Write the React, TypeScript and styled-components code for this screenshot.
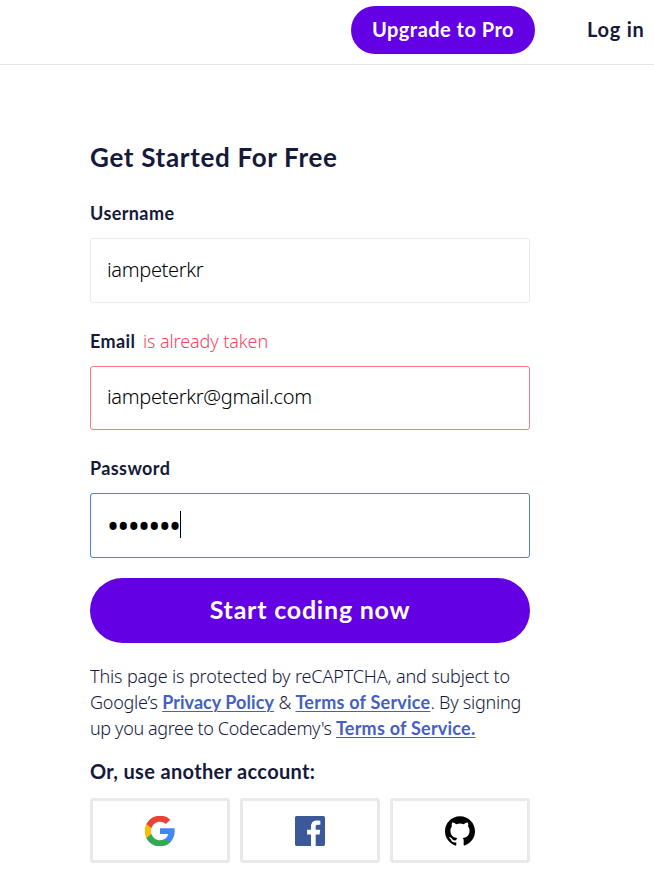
import React from 'react';
import styled, { createGlobalStyle, css } from 'styled-components';

const GlobalStyle = createGlobalStyle`
  *, *::before, *::after { box-sizing: border-box; }
  body { margin: 0; background: #fff; color: #15193a; font-family: "Noto Sans", sans-serif; }
`;

const strong = css`
  font-family: Lato, sans-serif;
  font-weight: 700;
`;

const Page = styled.div`
  width: 654px;
  height: 892px;
  overflow: hidden;
`;

const Header = styled.header`
  display: flex;
  justify-content: flex-end;
  align-items: flex-start;
  gap: 52px;
  height: 65px;
  padding: 6px 10px 0 0;
  border-bottom: 1px solid #e6e6e8;
`;

const UpgradeButton = styled.button`
  ${strong}
  width: 184px;
  height: 48px;
  padding: 0 0 2px;
  border: 0;
  border-radius: 24px;
  background: #6400e4;
  color: #fff;
  font-size: 20px;
  letter-spacing: 0.48px;
  line-height: 46px;
  white-space: nowrap;
`;

const LoginLink = styled.a`
  ${strong}
  width: 57px;
  font-size: 20px;
  letter-spacing: 0.75px;
  line-height: 46px;
  white-space: nowrap;
`;

const Form = styled.form`
  display: flex;
  flex-direction: column;
  width: 440px;
  margin: 76px 0 0 90px;
`;

const Title = styled.h1`
  ${strong}
  margin: 0 0 25px;
  font-size: 26px;
  letter-spacing: 0.68px;
  line-height: 32px;
  white-space: nowrap;
`;

const Field = styled.div`
  height: 127.5px;
`;

const LabelRow = styled.div`
  display: flex;
  align-items: baseline;
  gap: 7.5px;
  height: 40px;
  line-height: 30px;
  white-space: nowrap;
`;

const Label = styled.label`
  ${strong}
  font-size: 18px;
  letter-spacing: 0.4px;
`;

const ErrorText = styled.span`
  color: #f74660;
  font-size: 18px;
  font-weight: 300;
  letter-spacing: -0.1px;
`;

const borders = { idle: '#e9eaea', error: '#f47c80', focus: '#4a80e4' };

const InputBox = styled.div<{ $state: keyof typeof borders }>`
  display: flex;
  align-items: center;
  height: 64.5px;
  padding: 0 16px 2px;
  border: 1px solid ${p => borders[p.$state]};
  border-radius: 3px;
  color: #000;
  font-size: 20px;
  font-weight: 300;
  letter-spacing: -0.34px;
`;

const Dots = styled.span`
  padding-top: 4px;
  font-size: 32px;
  font-weight: 400;
  letter-spacing: -1.7px;
  line-height: 28px;
`;

const Caret = styled.span`
  width: 1px;
  height: 27px;
  margin-left: 1px;
  background: #000;
`;

const SubmitButton = styled.button`
  ${strong}
  height: 65px;
  margin-top: -2.5px;
  padding: 0 0 3px;
  border: 0;
  border-radius: 33px;
  background: #6400e4;
  color: #fff;
  font-size: 25px;
  letter-spacing: 0.78px;
`;

const Legal = styled.p`
  margin: 20px 0 0;
  font-size: 18px;
  font-weight: 300;
  line-height: 26px;
  white-space: nowrap;
`;

const LegalLine = styled.span<{ $tracking: number }>`
  display: block;
  letter-spacing: ${p => p.$tracking}px;
`;

const LegalLink = styled.a<{ $tracking?: number }>`
  ${strong}
  color: #4560c0;
  letter-spacing: ${p => p.$tracking ?? 0.23}px;
  text-decoration: underline;
  text-decoration-thickness: 1px;
  text-underline-offset: 2px;
`;

const AltHeading = styled.h2`
  ${strong}
  margin: 16px 0 0;
  font-size: 20px;
  letter-spacing: 0.33px;
  line-height: 28px;
`;

const SocialRow = styled.div`
  display: grid;
  grid-template-columns: repeat(3, 1fr);
  gap: 10px;
  margin-top: 13px;
`;

const SocialButton = styled.button`
  display: flex;
  align-items: center;
  justify-content: center;
  height: 65px;
  padding: 0;
  border: 3px solid #e8eaea;
  border-radius: 3px;
  background: #fff;

  svg { display: block; width: 30px; height: 30px; }
`;

const GoogleIcon = () => (
  <svg viewBox="0 0 48 48">
    <path fill="#4285F4" d="M47.5 24.55c0-1.65-.15-3.25-.4-4.77H24v9.04h13.2c-.58 3.04-2.3 5.6-4.9 7.34v6.1h7.93c4.63-4.28 7.27-10.57 7.27-17.71z" />
    <path fill="#34A853" d="M24 48.5c6.6 0 12.15-2.18 16.23-5.93l-7.93-6.14c-2.2 1.47-5 2.35-8.3 2.35-6.38 0-11.78-4.3-13.7-10.1H2.1v6.34C6.16 43.09 14.42 48.5 24 48.5z" />
    <path fill="#FBBC05" d="M10.3 28.68A14.7 14.7 0 0 1 9.5 24c0-1.63.28-3.2.8-4.68v-6.34H2.1A24.4 24.4 0 0 0-.5 24c0 3.96.95 7.7 2.6 11.02z" />
    <path fill="#EA4335" d="M24 9.2c3.6 0 6.83 1.24 9.37 3.67l7.03-7.03C36.15 1.88 30.6-.5 24-.5 14.42-.5 6.16 4.9 2.1 12.98l8.2 6.34C12.22 13.5 17.62 9.2 24 9.2z" />
  </svg>
);

const FacebookIcon = () => (
  <svg viewBox="0 0 24 24">
    <path fill="#3B5998" d="M22.676 0H1.324C.593 0 0 .593 0 1.324v21.352C0 23.408.593 24 1.324 24h11.494v-9.294H9.689v-3.621h3.129V8.41c0-3.099 1.894-4.785 4.659-4.785 1.325 0 2.464.097 2.796.141v3.24h-1.921c-1.5 0-1.792.721-1.792 1.771v2.311h3.584l-.465 3.63H16.56V24h6.115c.733 0 1.325-.592 1.325-1.324V1.324C24 .593 23.408 0 22.676 0" />
  </svg>
);

const GithubIcon = () => (
  <svg viewBox="0 0 24 24">
    <path d="M12 .297c-6.63 0-12 5.373-12 12 0 5.303 3.438 9.8 8.205 11.385.6.113.82-.258.82-.577 0-.285-.01-1.04-.015-2.04-3.338.724-4.042-1.61-4.042-1.61C4.422 18.07 3.633 17.7 3.633 17.7c-1.087-.744.084-.729.084-.729 1.205.084 1.838 1.236 1.838 1.236 1.07 1.835 2.809 1.305 3.495.998.108-.776.417-1.305.76-1.605-2.665-.3-5.466-1.332-5.466-5.93 0-1.31.465-2.38 1.235-3.22-.135-.303-.54-1.523.105-3.176 0 0 1.005-.322 3.3 1.23.96-.267 1.98-.399 3-.405 1.02.006 2.04.138 3 .405 2.28-1.552 3.285-1.23 3.285-1.23.645 1.653.24 2.873.12 3.176.765.84 1.23 1.91 1.23 3.22 0 4.61-2.805 5.625-5.475 5.92.42.36.81 1.096.81 2.22 0 1.606-.015 2.896-.015 3.286 0 .315.21.69.825.57C20.565 22.092 24 17.592 24 12.297c0-6.627-5.373-12-12-12" />
  </svg>
);

export default function App() {
  return (
    <Page>
      <GlobalStyle />
      <Header>
        <UpgradeButton>Upgrade to Pro</UpgradeButton>
        <LoginLink>Log in</LoginLink>
      </Header>
      <Form>
        <Title>Get Started For Free</Title>
        <Field>
          <LabelRow><Label>Username</Label></LabelRow>
          <InputBox $state="idle">iampeterkr</InputBox>
        </Field>
        <Field>
          <LabelRow><Label>Email</Label><ErrorText>is already taken</ErrorText></LabelRow>
          <InputBox $state="error">iampeterkr@gmail.com</InputBox>
        </Field>
        <Field>
          <LabelRow><Label>Password</Label></LabelRow>
          <InputBox $state="focus"><Dots>•••••••</Dots><Caret /></InputBox>
        </Field>
        <SubmitButton type="button">Start coding now</SubmitButton>
        <Legal>
          <LegalLine $tracking={-0.14}>This page is protected by reCAPTCHA, and subject to</LegalLine>
          <LegalLine $tracking={-0.24}>
            Google’s <LegalLink $tracking={0.05}>Privacy Policy</LegalLink> &amp; <LegalLink>Terms of Service</LegalLink>. By signing
          </LegalLine>
          <LegalLine $tracking={-0.37}>
            up you agree to Codecademy's <LegalLink>Terms of Service.</LegalLink>
          </LegalLine>
        </Legal>
        <AltHeading>Or, use another account:</AltHeading>
        <SocialRow>
          <SocialButton type="button" aria-label="Google"><GoogleIcon /></SocialButton>
          <SocialButton type="button" aria-label="Facebook"><FacebookIcon /></SocialButton>
          <SocialButton type="button" aria-label="GitHub"><GithubIcon /></SocialButton>
        </SocialRow>
      </Form>
    </Page>
  );
}
